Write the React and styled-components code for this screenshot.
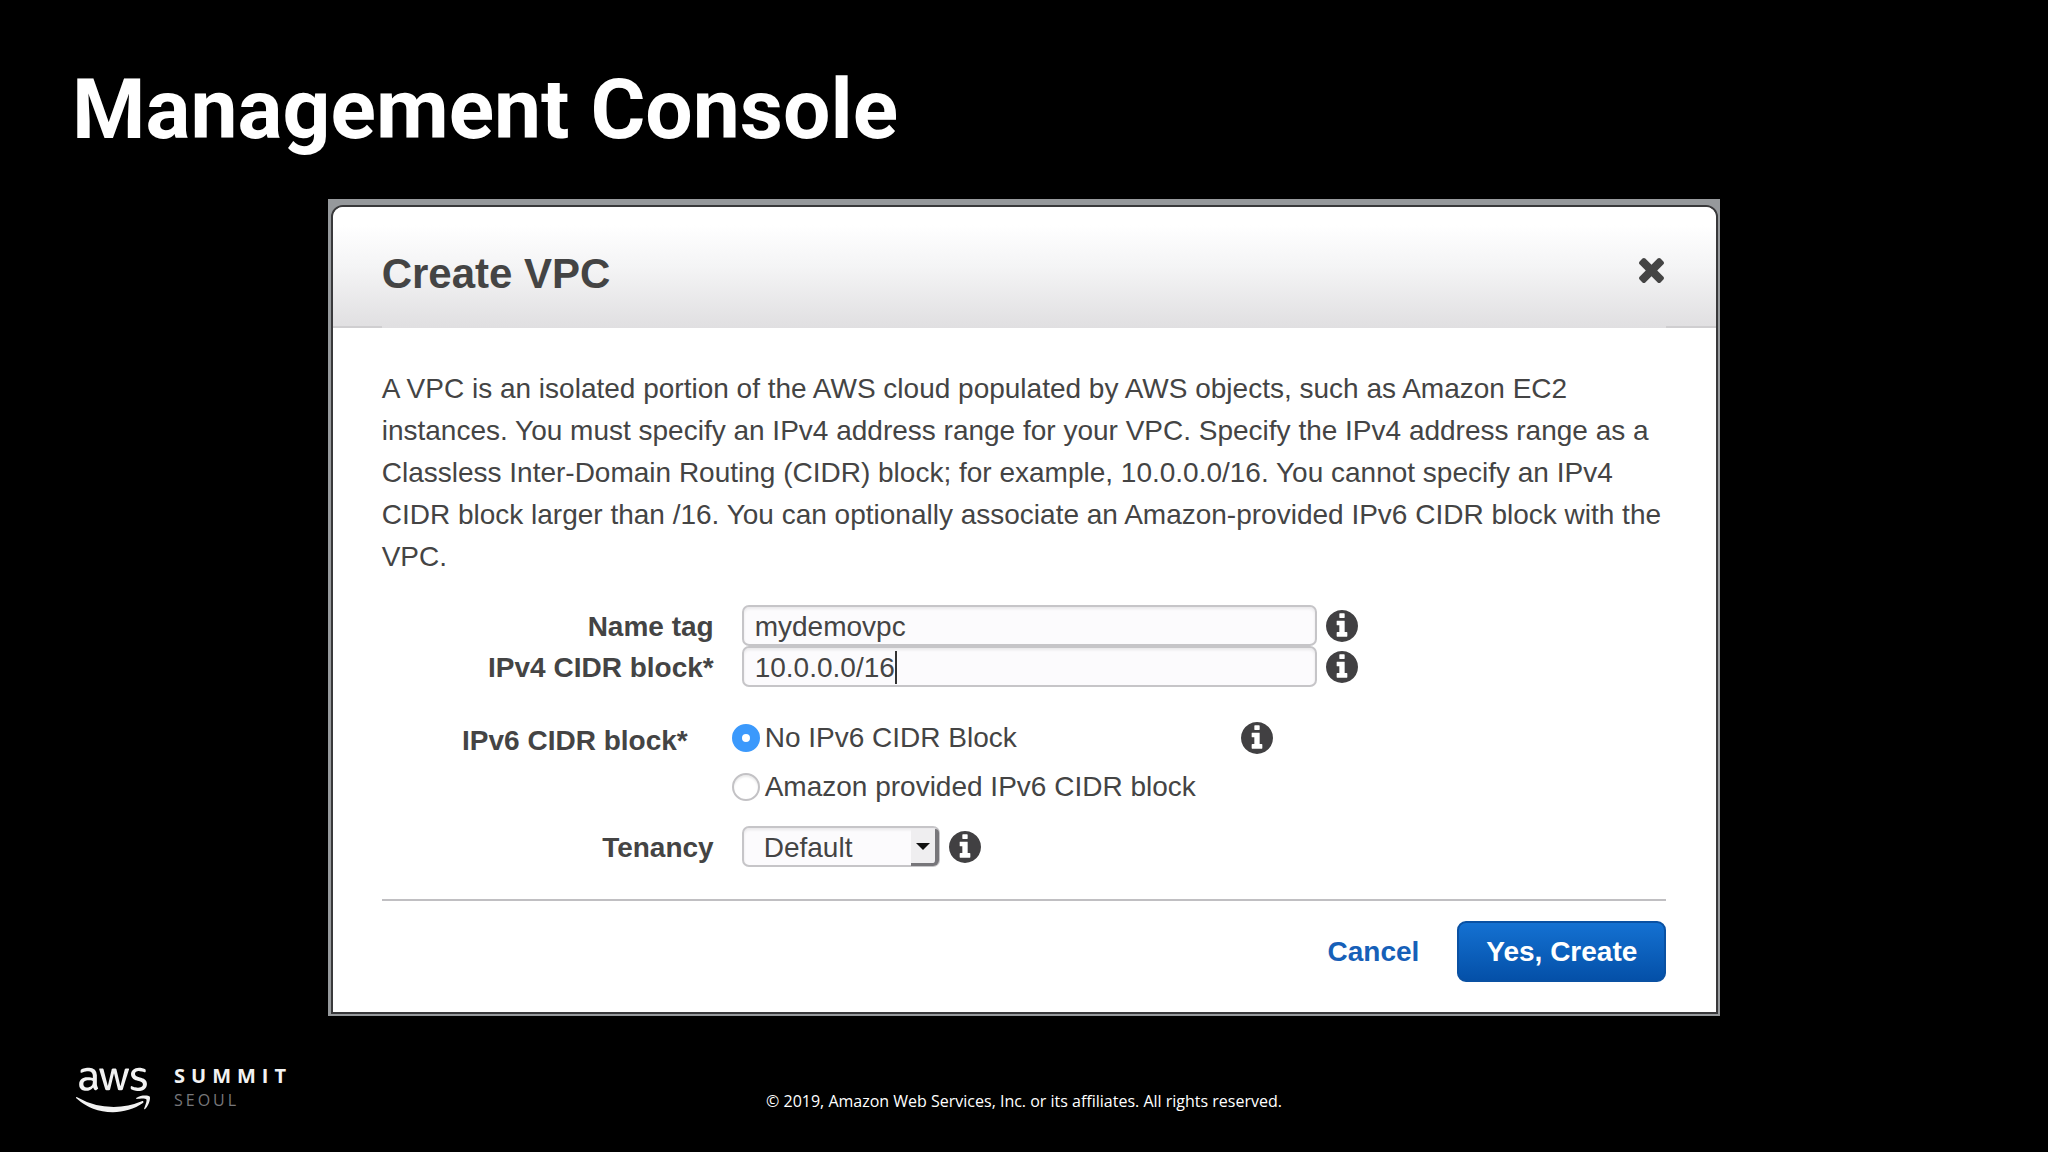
import { useState } from "react";
import styled, { createGlobalStyle } from "styled-components";
import { FaAws } from "react-icons/fa";

const GlobalStyle = createGlobalStyle`
  *, *::before, *::after {
    box-sizing: border-box;
  }
  body {
    margin: 0;
    background: #000;
  }
`;

const Slide = styled.div`
  display: flex;
  flex-direction: column;
  min-height: 100vh;
  background: #000;
  color: #fff;
  font-family: "Open Sans", "Noto Sans", sans-serif;
`;

const SlideTitle = styled.h1`
  margin: 0;
  padding: 60px 72px 39px;
  font-family: Roboto, "Noto Sans", sans-serif;
  font-size: 84px;
  line-height: 100px;
  font-weight: 700;
`;

const Frame = styled.main`
  width: 68%;
  margin: 0 auto;
  border: solid #96999c;
  border-width: 6px 2px 2px 3px;
  background: #96999c;
`;

const Dialog = styled.section`
  border: 2px solid #39393b;
  border-radius: 12px 12px 0 0;
  background: #fff;
  color: #444;
  font-family: "Liberation Sans", Arial, sans-serif;
  font-size: 28px;
`;

const DialogHeader = styled.header`
  display: flex;
  align-items: center;
  justify-content: space-between;
  height: 121px;
  padding: 12px 50px 0 49px;
  border-radius: 10px 10px 0 0;
  background:
    linear-gradient(#cfced0, #cfced0) left bottom / 49px 2px no-repeat,
    linear-gradient(#cfced0, #cfced0) right bottom / 50px 2px no-repeat,
    linear-gradient(#fff 15%, #f4f4f5 50%, #e0dfe1);
`;

const DialogTitle = styled.h2`
  margin: 0;
  font-size: 42px;
  line-height: 48px;
`;

const CloseButton = styled.button`
  display: flex;
  margin: 0 2px 6px 0;
  padding: 0;
  border: 0;
  background: none;
  color: #444;
  cursor: pointer;
`;

const DialogBody = styled.div`
  padding: 40px 50px 30px 49px;
`;

const Description = styled.p`
  margin: 0 0 27px;
  line-height: 42px;
`;

const Row = styled.div`
  display: flex;
  align-items: ${(props) => (props.$top ? "flex-start" : "center")};
  margin-top: ${(props) => props.$space || 0}px;
`;

const Label = styled.label`
  flex: none;
  width: ${(props) => props.$width || 332}px;
  height: 41px;
  margin-right: ${(props) => props.$gap || 28}px;
  padding-top: 1px;
  line-height: 41px;
  font-weight: 700;
  text-align: right;
`;

const GroupLabel = styled(Label).attrs({ as: "span" })`
  height: auto;
  line-height: 54px;
`;

const Field = styled.div`
  position: relative;
  flex: 0 1 575px;
`;

const TextInput = styled.input`
  display: block;
  width: 100%;
  height: 41px;
  padding: 2px 11px 0;
  border: 2px solid #c6c5c8;
  border-radius: 7px;
  outline: 0;
  background: #fcfbfd;
  box-shadow: inset 0 2px 3px rgba(0, 0, 0, 0.08);
  color: #444;
  font: inherit;
  caret-color: transparent;
`;

// dots and the slash are half a digit wide, so the value spans 9ch
const Caret = styled.span`
  position: absolute;
  top: 5px;
  left: calc(13px + 9ch);
  width: 2px;
  height: 33px;
  background: #333;
`;

const InfoButton = styled.button`
  flex: none;
  display: flex;
  margin: 0 0 0 ${(props) => props.$gap || 9}px;
  padding: 0;
  border: 0;
  background: none;
  color: #414042;
  cursor: pointer;
`;

const Options = styled.div`
  flex: 0 1 508px;
`;

const Option = styled.label`
  display: flex;
  align-items: center;
  gap: 5px;
  height: 49px;
`;

const Radio = styled.input`
  appearance: none;
  flex: none;
  width: 28px;
  height: 28px;
  margin: 0;
  border: 2px solid #c3c2c5;
  border-radius: 50%;
  background: #fff;
  box-shadow: inset 0 2px 2px rgba(0, 0, 0, 0.08);

  &:checked {
    border: 10px solid #3b99fc;
    box-shadow: none;
  }
`;

const SelectBox = styled.div`
  position: relative;
  flex: none;
  width: 198px;
`;

const Select = styled.select`
  appearance: none;
  display: block;
  width: 100%;
  height: 41px;
  padding: 2px 36px 0 20px;
  border: 2px solid #c6c5c8;
  border-radius: 7px;
  background: #fcfbfd;
  box-shadow: inset 0 2px 3px rgba(0, 0, 0, 0.08);
  color: #444;
  font: inherit;
`;

const SelectArrow = styled.span`
  position: absolute;
  top: 3px;
  right: 1px;
  display: flex;
  align-items: center;
  justify-content: center;
  width: 28px;
  height: 37px;
  border: solid #77767a;
  border-width: 0 4px 3px 0;
  border-radius: 0 4px 6px 0;
  background: #efeef0;
  pointer-events: none;
`;

const Actions = styled.div`
  display: flex;
  align-items: center;
  justify-content: flex-end;
  gap: 38px;
  margin-top: 32px;
  padding-top: 20px;
  border-top: 2px solid #c0bfc2;
`;

const Button = styled.button`
  padding: 0;
  border: 0;
  background: none;
  color: #1660b8;
  font: inherit;
  font-weight: 700;
  cursor: pointer;
`;

const PrimaryButton = styled(Button)`
  height: 61px;
  padding: 0 27px;
  border: 2px solid #0a51a3;
  border-radius: 9px;
  background: linear-gradient(#1471d2, #0450a8);
  color: #fff;
`;

const Footer = styled.footer`
  display: grid;
  grid-template-columns: 1fr auto 1fr;
  align-items: end;
  margin-top: auto;
  padding: 0 76px 25px;
`;

const Brand = styled.div`
  display: flex;
  align-items: center;
  gap: 24px;
  color: #f2f2f2;
`;

const Event = styled.div`
  display: flex;
  flex-direction: column;
  padding-bottom: 6px;
`;

const EventName = styled.span`
  font-size: 20px;
  line-height: 26px;
  font-weight: 700;
  letter-spacing: 6px;
`;

const EventCity = styled.span`
  color: #77777a;
  font-size: 16px;
  line-height: 22px;
  letter-spacing: 3px;
`;

const Copyright = styled.small`
  padding-bottom: 15px;
  font-size: 16px;
  line-height: 22px;
`;

const CloseIcon = () => (
  <svg width="25" height="25" viewBox="302 366 1188 1188" aria-hidden="true">
    <path
      fill="currentColor"
      d="M1490 1322q0 40-28 68l-136 136q-28 28-68 28t-68-28l-294-294-294 294q-28 28-68 28t-68-28l-136-136q-28-28-28-68t28-68l294-294-294-294q-28-28-28-68t28-68l136-136q28-28 68-28t68 28l294 294 294-294q28-28 68-28t68 28l136 136q28 28 28 68t-28 68l-294 294 294 294q28 28 28 68z"
    />
  </svg>
);

const Info = ({ topic, gap }) => (
  <InfoButton type="button" aria-label={`About ${topic}`} $gap={gap}>
    <svg width="32" height="32" viewBox="128 128 1536 1536" aria-hidden="true">
      <path
        fill="currentColor"
        d="M1152 1376v-160q0-14-9-23t-23-9h-96v-512q0-14-9-23t-23-9h-320q-14 0-23 9t-9 23v160q0 14 9 23t23 9h96v320h-96q-14 0-23 9t-9 23v160q0 14 9 23t23 9h448q14 0 23-9t9-23zm-128-896v-160q0-14-9-23t-23-9h-192q-14 0-23 9t-9 23v160q0 14 9 23t23 9h192q14 0 23-9t9-23zm640 416q0 209-103 385.5t-279.5 279.5-385.5 103-385.5-103-279.5-279.5-103-385.5 103-385.5 279.5-279.5 385.5-103 385.5 103 279.5 279.5 103 385.5z"
      />
    </svg>
  </InfoButton>
);

const CreateVpcDialog = () => {
  const [name, setName] = useState("mydemovpc");
  const [cidr, setCidr] = useState("10.0.0.0/16");
  const [ipv6, setIpv6] = useState("none");

  return (
    <Dialog role="dialog" aria-labelledby="dialog-title">
      <DialogHeader>
        <DialogTitle id="dialog-title">Create VPC</DialogTitle>
        <CloseButton type="button" aria-label="Close">
          <CloseIcon />
        </CloseButton>
      </DialogHeader>
      <DialogBody>
        <Description>
          A VPC is an isolated portion of the AWS cloud populated by AWS
          objects, such as Amazon EC2 instances. You must specify an IPv4
          address range for your VPC. Specify the IPv4 address range as a
          Classless Inter-Domain Routing (CIDR) block; for example,
          10.0.0.0/16. You cannot specify an IPv4 CIDR block larger than /16.
          You can optionally associate an Amazon-provided IPv6 CIDR block with
          the VPC.
        </Description>
        <form onSubmit={(e) => e.preventDefault()}>
          <Row>
            <Label htmlFor="name">Name tag</Label>
            <Field>
              <TextInput
                id="name"
                value={name}
                onChange={(e) => setName(e.target.value)}
              />
            </Field>
            <Info topic="name tag" />
          </Row>
          <Row>
            <Label htmlFor="cidr">IPv4 CIDR block*</Label>
            <Field>
              <TextInput
                id="cidr"
                value={cidr}
                onChange={(e) => setCidr(e.target.value)}
              />
              <Caret />
            </Field>
            <Info topic="IPv4 CIDR block" />
          </Row>
          <Row $top $space={26} role="radiogroup" aria-labelledby="ipv6-label">
            <GroupLabel id="ipv6-label" $width={306} $gap={44}>
              IPv6 CIDR block*
            </GroupLabel>
            <Options>
              <Option>
                <Radio
                  type="radio"
                  name="ipv6"
                  checked={ipv6 === "none"}
                  onChange={() => setIpv6("none")}
                />
                No IPv6 CIDR Block
              </Option>
              <Option>
                <Radio
                  type="radio"
                  name="ipv6"
                  checked={ipv6 === "amazon"}
                  onChange={() => setIpv6("amazon")}
                />
                Amazon provided IPv6 CIDR block
              </Option>
            </Options>
            <Option as="div">
              <Info topic="IPv6 CIDR block" gap={1} />
            </Option>
          </Row>
          <Row $space={15}>
            <Label htmlFor="tenancy">Tenancy</Label>
            <SelectBox>
              <Select id="tenancy" defaultValue="Default">
                <option>Default</option>
                <option>Dedicated</option>
              </Select>
              <SelectArrow>
                <svg width="14" height="7" viewBox="0 0 14 7" aria-hidden="true">
                  <path d="M0 0h14L7 7z" fill="#111" />
                </svg>
              </SelectArrow>
            </SelectBox>
            <Info topic="tenancy" />
          </Row>
          <Actions>
            <Button type="button">Cancel</Button>
            <PrimaryButton type="submit">Yes, Create</PrimaryButton>
          </Actions>
        </form>
      </DialogBody>
    </Dialog>
  );
};

export default function App() {
  return (
    <>
      <GlobalStyle />
      <Slide>
        <SlideTitle>Management Console</SlideTitle>
        <Frame>
          <CreateVpcDialog />
        </Frame>
        <Footer>
          <Brand>
            <FaAws size={74} role="img" aria-label="aws" />
            <Event>
              <EventName>SUMMIT</EventName>
              <EventCity>SEOUL</EventCity>
            </Event>
          </Brand>
          <Copyright>
            © 2019, Amazon Web Services, Inc. or its affiliates. All rights
            reserved.
          </Copyright>
        </Footer>
      </Slide>
    </>
  );
}
